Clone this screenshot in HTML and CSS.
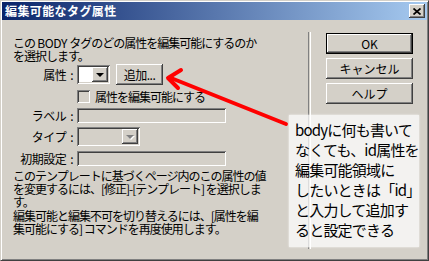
FILE: index.html
```html
<!DOCTYPE html>
<html lang="ja">
<head>
    <meta charset="UTF-8">
    <meta name="viewport" content="width=device-width, initial-scale=1.0">
    <title>編集可能なタグ属性</title>
    <link rel="stylesheet" href="styles.css">
</head>
<body>

<div class="window">
    <div class="titlebar">
        <span class="title">編集可能なタグ属性</span>
        <span class="close">
            <svg width="8" height="7" viewBox="0 0 8 7"><path d="M0.5 0.5L7.5 6.5M7.5 0.5L0.5 6.5" stroke="#000" stroke-width="1.7"/></svg>
        </span>
    </div>

    <div class="content">
        <div class="left">
            <p class="text">この<span class="lat"> BODY </span>タグのどの属性を編集可能にするのか<br>を選択します。</p>

            <div class="form">
                <!-- 属性 -->
                <span class="label">属性<b class="colon">:</b></span>
                <div class="ctrl">
                    <span class="combo combo-attr"><span class="field"></span><span class="drop"><i class="tri"></i></span></span>
                    <span class="btn btn-add">追加...</span>
                </div>
                <!-- チェックボックス -->
                <span class="label"></span>
                <div class="ctrl">
                    <span class="check"></span>
                    <span class="check-text">属性を編集可能にする</span>
                </div>
                <span class="label">ラベル<b class="colon">:</b></span>
                <div class="ctrl"><span class="input"></span></div>
                <span class="label">タイプ<b class="colon">:</b></span>
                <div class="ctrl">
                    <span class="combo combo-type disabled"><span class="field"></span><span class="drop"><i class="tri"></i></span></span>
                </div>
                <span class="label">初期設定<b class="colon">:</b></span>
                <div class="ctrl"><span class="input"></span></div>
            </div>

            <p class="text note">このテンプレートに基づくページ内のこの属性の値<br>を変更するには、[修正]-[テンプレート] を選択しま<br>す。</p>
            <p class="text note2">編集可能と編集不可を切り替えるには、[属性を編<br>集可能にする] コマンドを再度使用します。</p>
        </div>

        <div class="sep"></div>

        <div class="buttons">
            <span class="btn btn-default">OK</span>
            <span class="btn">キャンセル</span>
            <span class="btn">ヘルプ</span>
        </div>
    </div>

    <svg class="arrow" width="429" height="261" viewBox="0 0 429 261">
        <path d="M170 77L285 123" stroke="#ff0000" stroke-width="4" stroke-linecap="round"/>
        <path d="M180 69L167 77L177 87" stroke="#ff0000" stroke-width="4" fill="none" stroke-linecap="round" stroke-linejoin="round"/>
    </svg>

    <div class="callout">bodyに何も書いて<br>なくても、id属性を<br>編集可能領域に<br>したいときは「id」<br>と入力して追加す<br>ると設定できる</div>
</div>

</body>
</html>
```

FILE: styles.css
```css
body{
    margin: 0;
    background: #d4d0c8;
    font-family: "Noto Sans CJK JP", "Liberation Sans", sans-serif;
    font-size: 12px;
    color: #000;
}
.window{
    position: relative;
    width: 429px;
    height: 261px;
    box-sizing: border-box;
    background: #d4d0c8;
    border: 1px solid;
    border-color: #d4d0c8 #404040 #404040 #d4d0c8;
    box-shadow: inset 1px 1px #fff, inset -1px -1px #808080;
    padding: 1px 1px 0 1px;
    overflow: hidden;
}
.titlebar{
    height: 18px;
    display: flex;
    align-items: center;
    justify-content: space-between;
    padding: 0 2px 0 3px;
    background: linear-gradient(to right, #0a246a, #a6caf0);
}
.title{
    color: #fff;
    font-weight: bold;
    font-size: 12px;
    letter-spacing: 0.4px;
    line-height: 18px;
}
.close{
    width: 16px;
    height: 14px;
    box-sizing: border-box;
    background: #d4d0c8;
    display: flex;
    align-items: center;
    justify-content: center;
    box-shadow: inset -1px -1px #404040, inset 1px 1px #fff, inset -2px -2px #808080;
}
.content{
    display: flex;
    height: 239px;
}
.left{
    width: 295px;
    padding: 16px 0 0 11px;
    letter-spacing: -1px;
}
.text{
    margin: 0;
    line-height: 13px;
    white-space: pre;
}
.lat{
    letter-spacing: -0.4px;
}
.form{
    display: grid;
    grid-template-columns: 60px auto;
    grid-template-rows: 21px 15px 15px 19px 16px;
    column-gap: 4px;
    row-gap: 4px;
    margin-top: 2px;
}
.label{
    text-align: right;
    line-height: 15px;
    align-self: center;
    white-space: nowrap;
    letter-spacing: -0.5px;
}
.colon{
    font-weight: normal;
    margin-left: 4px;
}
.ctrl{
    display: flex;
    align-items: center;
    gap: 6px;
}
.combo{
    display: flex;
    box-sizing: border-box;
    height: 19px;
    padding: 2px;
    background: #fff;
    box-shadow: inset 1px 1px #808080, inset -1px -1px #fff, inset 2px 2px #404040, inset -2px -2px #d4d0c8;
}
.combo-attr{
    width: 33px;
}
.combo-type{
    width: 63px;
    background: #d4d0c8;
}
.combo .field{
    flex: 1;
}
.drop{
    width: 16px;
    display: flex;
    align-items: center;
    justify-content: center;
    background: #d4d0c8;
    box-shadow: inset -1px -1px #404040, inset 1px 1px #fff, inset -2px -2px #808080;
}
.tri{
    width: 0;
    height: 0;
    border-left: 4px solid transparent;
    border-right: 4px solid transparent;
    border-top: 4px solid #000;
    margin-left: -1px;
}
.disabled .tri{
    border-top-color: #808080;
    filter: drop-shadow(1px 1px 0 #fff);
}
.btn{
    display: flex;
    align-items: center;
    justify-content: center;
    box-sizing: border-box;
    background: #d4d0c8;
    box-shadow: inset -1px -1px #404040, inset 1px 1px #fff, inset -2px -2px #808080;
    letter-spacing: 0;
}
.btn-add{
    width: 47px;
    height: 21px;
    letter-spacing: -0.5px;
}
.check{
    width: 13px;
    height: 13px;
    box-sizing: border-box;
    background: #d4d0c8;
    box-shadow: inset 1px 1px #808080, inset -1px -1px #fff, inset 2px 2px #404040, inset -2px -2px #d4d0c8;
}
.check-text{
    margin-left: -1px;
    line-height: 15px;
}
.input{
    width: 149px;
    height: 15px;
    box-sizing: border-box;
    background: #d4d0c8;
    box-shadow: inset 1px 1px #808080, inset -1px -1px #fff, inset 2px 2px #404040, inset -2px -2px #d4d0c8;
}
.note{
    margin-top: 3px;
}
.note2{
    margin-top: 1px;
}
.sep{
    width: 1px;
    height: 217px;
    margin-top: 12px;
    border-left: 1px solid #808080;
    border-right: 1px solid #fff;
}
.buttons{
    display: flex;
    flex-direction: column;
    gap: 4px;
    padding: 13px 0 0 15px;
}
.buttons .btn{
    width: 87px;
    height: 21px;
}
.btn-default{
    outline: 1px solid #000;
    outline-offset: -1px;
    box-shadow: inset -2px -2px #404040, inset 2px 2px #fff, inset -3px -3px #808080;
}

/* 注釈 */
.arrow{
    position: absolute;
    left: 0;
    top: 0;
    pointer-events: none;
}
.callout{
    position: absolute;
    left: 288px;
    top: 114px;
    width: 130px;
    height: 132px;
    box-sizing: border-box;
    padding: 5px 0 0 6px;
    background: rgba(255, 255, 255, 0.72);
    box-shadow: 0 0 2px rgba(255, 255, 255, 0.8);
    font-size: 15px;
    line-height: 20px;
    white-space: nowrap;
    letter-spacing: -0.8px;
}
```
